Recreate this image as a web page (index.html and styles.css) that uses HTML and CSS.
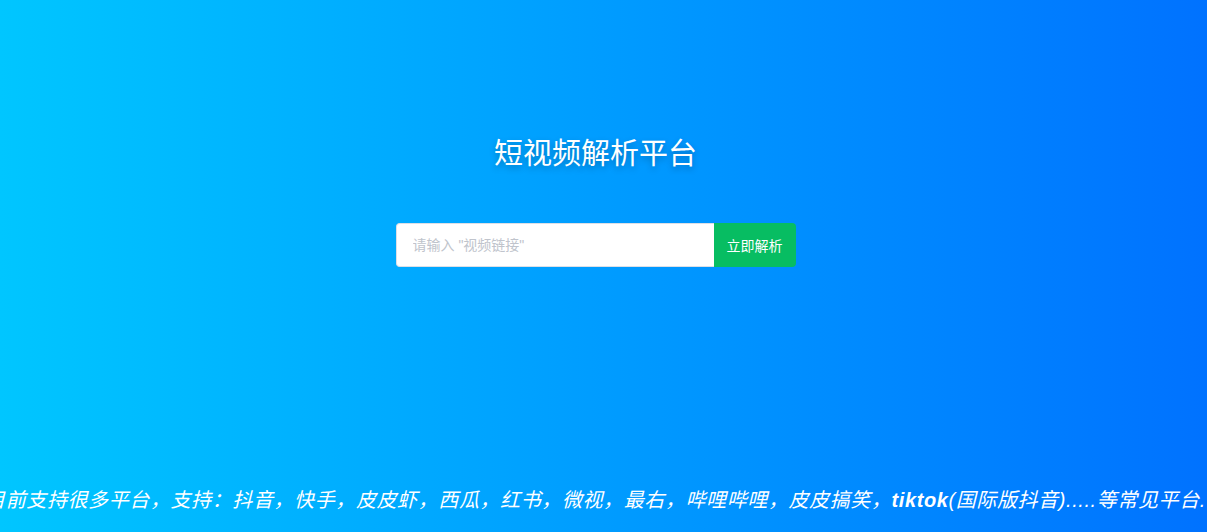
FILE: index.html
```html
<!DOCTYPE html>
<html lang="zh">
<head>
<meta charset="utf-8">
<title>短视频解析平台</title>
<link rel="stylesheet" href="styles.css">
</head>
<body>
<div class="page">
  <main class="hero">
    <h1 class="title">短视频解析平台</h1>
    <form class="search">
      <input class="search-input" type="text" placeholder="请输入 &quot;视频链接&quot;">
      <button class="search-btn" type="button">立即解析</button>
    </form>
  </main>
  <div class="marquee">
    <span class="marquee-text">目前支持很多平台，支持：抖音，快手，皮皮虾，西瓜，红书，微视，最右，哔哩哔哩，皮皮搞笑，<b>tiktok</b>(国际版抖音).....等常见平台.</span>
  </div>
</div>
</body>
</html>
```
FILE: styles.css
```css
* { box-sizing: border-box; }
html, body { margin: 0; padding: 0; height: 100%; }
body {
  font-family: "Liberation Sans", "Noto Sans CJK SC", sans-serif;
  background: linear-gradient(to right, #00c6ff, #0072ff);
  overflow: hidden;
}
.page {
  height: 100vh;
  display: flex;
  flex-direction: column;
  padding-right: 16px;
}
.hero {
  display: flex;
  flex-direction: column;
  align-items: center;
  padding-top: 134px;
}
.title {
  margin: 0;
  font-weight: normal;
  font-size: 29px;
  line-height: 40px;
  color: #fff;
  text-shadow: 0 3px 6px rgba(0, 0, 0, 0.25);
}
.search {
  margin: 49px 0 0 0;
  display: flex;
  height: 44px;
}
.search-input {
  width: 318px;
  height: 44px;
  border: 1px solid #dcdfe6;
  border-right: none;
  border-radius: 4px 0 0 4px;
  padding: 0 16px;
  font-size: 14px;
  font-family: "Liberation Sans", "Noto Sans CJK SC", sans-serif;
  background: #fff;
  outline: none;
}
.search-input::placeholder { color: #c0c4cc; }
.search-btn {
  width: 82px;
  height: 44px;
  border: none;
  border-radius: 0 4px 4px 0;
  background: #07bd62;
  color: #fff;
  font-size: 14px;
  font-family: "Liberation Sans", "Noto Sans CJK SC", sans-serif;
  padding: 0;
}
.marquee {
  margin-top: auto;
  margin-bottom: 17px;
  display: flex;
  justify-content: center;
  white-space: nowrap;
}
.marquee-text {
  font-size: 20px;
  letter-spacing: 0.6px;
  line-height: 30px;
  font-style: italic;
  color: #fff;
  flex-shrink: 0;
}
.marquee-text b { font-weight: bold; }
```
